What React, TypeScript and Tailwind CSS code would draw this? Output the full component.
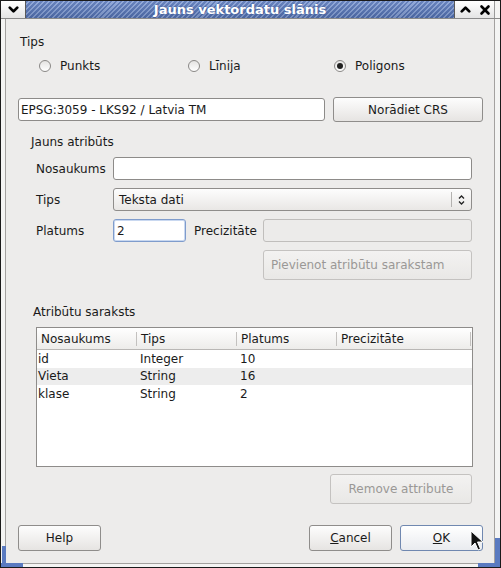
import type { ReactNode } from 'react';
import { ChevronDown, ChevronUp, X } from 'lucide-react';

// Shared widget looks (Clearlooks-like GTK theme)
const FIELD = 'rounded-[3px] border border-[#8d8b89] bg-white';
const BUTTON =
  'flex items-center justify-center rounded-[3px] border border-[#8f8d8b] bg-[linear-gradient(#fdfdfd,#e6e4e2)] text-[#1a1a1a]';
const BUTTON_OFF =
  'flex items-center justify-center rounded-[3px] border border-[#c4c2c0] bg-[linear-gradient(#f3f2f1,#e9e8e6)] text-[#9a9896]';

function Radio({ label, checked }: { label: string; checked?: boolean }) {
  return (
    <div className="flex items-center gap-[9px]">
      <span className="flex h-[12px] w-[12px] items-center justify-center rounded-full border border-[#8a8886] bg-[linear-gradient(#e4e3e2,#ffffff)]">
        {checked && <span className="h-[6px] w-[6px] rounded-full bg-[#202020]" />}
      </span>
      <span>{label}</span>
    </div>
  );
}

function Row({ label, children }: { label: string; children: ReactNode }) {
  return (
    <div className="mt-[8px] flex h-[23px] items-center pl-[30px]">
      <span className="w-[77px]">{label}</span>
      {children}
    </div>
  );
}

const COLUMNS = [
  { name: 'Nosaukums', w: 'w-[99px]' },
  { name: 'Tips', w: 'w-[100px]' },
  { name: 'Platums', w: 'w-[100px]' },
  { name: 'Precizitāte', w: 'w-[134px]' },
];

const ATTRS = [
  ['id', 'Integer', '10'],
  ['Vieta', 'String', '16'],
  ['klase', 'String', '2'],
];

export default function App() {
  return (
    <div className="relative flex h-[568px] w-[501px] flex-col overflow-hidden border border-[#1a1a1a] bg-[#f4f4f3] font-['DejaVu_Sans',sans-serif] text-[12px] leading-[14px] text-[#1a1a1a]">
      {/* Title bar */}
      <div className="flex h-[18px] shrink-0 border-b border-[#8a8a8a]">
        <div className="flex w-[25px] shrink-0 items-center justify-center border-r border-[#5a5a5a] bg-[linear-gradient(#ffffff,#e4e4e4)]">
          <ChevronDown size={15} strokeWidth={4.5} color="#000" className="shrink-0" />
        </div>
        <div className="flex flex-1 items-center justify-center bg-[linear-gradient(rgba(255,255,255,0.12),rgba(0,0,0,0.12)),repeating-linear-gradient(135deg,#5473b6_0px,#5473b6_2px,#86a0d6_2px,#86a0d6_3.5px)] text-[13px] font-bold text-white [text-shadow:0_0_2px_#3a5590]">
          Jauns vektordatu slānis
        </div>
        <div className="flex w-[22px] shrink-0 items-center justify-center border-l border-[#5a5a5a] bg-[linear-gradient(#ffffff,#e4e4e4)]">
          <ChevronUp size={15} strokeWidth={4.5} color="#000" className="shrink-0" />
        </div>
        <div className="flex w-[18px] shrink-0 items-center justify-center bg-[linear-gradient(#ffffff,#e4e4e4)]">
          <X size={14} strokeWidth={4.5} color="#000" className="shrink-0" />
        </div>
        <div className="w-[6px] shrink-0 border-l border-[#9a9a9a] bg-[#f4f4f3]" />
      </div>

      {/* Dialog body */}
      <div className="mb-[3px] ml-[4px] mr-[5px] flex flex-1 flex-col border-x border-b border-[#a3a19f] bg-[#edeceb]">
        <div className="mt-[16px] pl-[14px]">Tips</div>

        <div className="mt-[10px] flex h-[14px] items-center pl-[33px]">
          <div className="w-[149px]">
            <Radio label="Punkts" />
          </div>
          <div className="w-[146px]">
            <Radio label="Līnija" />
          </div>
          <Radio label="Poligons" checked />
        </div>

        <div className="mt-[24px] flex items-center pl-[12px]">
          <div className={`${FIELD} flex h-[23px] w-[307px] items-center pl-[2px]`}>EPSG:3059 - LKS92 / Latvia TM</div>
          <button className={`${BUTTON} ml-[8px] h-[25px] w-[150px]`}>Norādiet CRS</button>
        </div>

        <div className="mt-[13px] pl-[25px]">Jauns atribūts</div>

        <Row label="Nosaukums">
          <div className={`${FIELD} h-[23px] w-[359px]`} />
        </Row>

        <Row label="Tips">
          <div className="flex h-[23px] w-[359px] items-center rounded-[3px] border border-[#8f8d8b] bg-[linear-gradient(#fdfdfd,#e9e7e5)]">
            <span className="flex-1 pl-[5px]">Teksta dati</span>
            <span className="h-[15px] border-l border-[#b4b2b0]" />
            <svg className="mx-[6px]" width="7" height="12" viewBox="0 0 7 12">
              <path d="M1 4.5 L3.5 2 L6 4.5 M1 7.5 L3.5 10 L6 7.5" fill="none" stroke="#222" strokeWidth="1.3" />
            </svg>
          </div>
        </Row>

        <Row label="Platums">
          <div className="flex h-[23px] w-[73px] items-center rounded-[3px] border border-[#7f9ccc] bg-white pl-[3px] shadow-[inset_0_0_0_1px_#c9d8f0]">
            2
          </div>
          <span className="ml-[8px] w-[69px]">Precizitāte</span>
          <div className="h-[23px] w-[209px] rounded-[3px] border border-[#c0bebc] bg-[#ecebea]" />
        </Row>

        <button className={`${BUTTON_OFF} ml-[257px] mt-[8px] h-[30px] w-[209px] justify-start pl-[7px]`}>
          Pievienot atribūtu sarakstam
        </button>

        <div className="mt-[25px] pl-[27px]">Atribūtu saraksts</div>

        {/* Attribute table */}
        <div className="ml-[30px] mt-[8px] flex h-[140px] w-[437px] flex-col border border-[#8e8c8a] bg-white">
          <div className="flex h-[22px] shrink-0 border-b border-[#b9b7b5] bg-[linear-gradient(#ffffff,#edecea)]">
            {COLUMNS.map((c, i) => (
              <div key={c.name} className={`${c.w} flex items-center`}>
                {i > 0 && <span className="mr-[4px] h-[14px] border-l border-[#c3c1bf]" />}
                <span className={i === 0 ? 'pl-[4px]' : ''}>{c.name}</span>
              </div>
            ))}
            <div className="flex flex-1 items-center">
              <span className="h-[14px] border-l border-[#c3c1bf]" />
            </div>
          </div>
          {ATTRS.map((r, i) => (
            <div key={r[0]} className={`flex h-[17.5px] items-center ${i === 1 ? 'bg-[#ededed]' : 'bg-white'}`}>
              <span className="w-[99px] pl-[1px]">{r[0]}</span>
              <span className="w-[100px] pl-[4px]">{r[1]}</span>
              <span className="w-[100px] pl-[4px]">{r[2]}</span>
            </div>
          ))}
        </div>

        <button className={`${BUTTON_OFF} ml-[324px] mt-[7px] h-[30px] w-[142px]`}>Remove attribute</button>

        <div className="mt-[21px] flex items-center pl-[12px]">
          <button className={`${BUTTON} h-[26px] w-[83px]`}>Help</button>
          <button className={`${BUTTON} ml-[208px] h-[26px] w-[83px]`}>
            <span>
              <span className="underline">C</span>ancel
            </span>
          </button>
          <button className={`${BUTTON} ml-[8px] h-[26px] w-[83px] border-[#7088b0] bg-[linear-gradient(#ffffff,#e9ebef)]`}>
            <span>
              <span className="underline">O</span>K
            </span>
          </button>
        </div>
      </div>

      {/* Resize grips in the frame corners */}
      <div className="absolute bottom-[1px] left-[1px] h-[20px] w-[4px] bg-[#5a7ac0]" />
      <div className="absolute bottom-0 left-0 h-[4px] w-[22px] bg-[#5a7ac0]" />
      <div className="absolute bottom-[1px] right-0 h-[28px] w-[5px] bg-[#5a7ac0]" />
      <div className="absolute bottom-0 right-0 h-[4px] w-[22px] bg-[#5a7ac0]" />

      {/* Mouse pointer */}
      <svg className="absolute left-[469px] top-[529px]" width="14" height="22" viewBox="0 0 14 22">
        <path d="M1 1 L1 17 L5 13 L8 20 L10.5 19 L7.5 12 L13 12 Z" fill="#111" stroke="#fff" strokeWidth="1" />
      </svg>
    </div>
  );
}
